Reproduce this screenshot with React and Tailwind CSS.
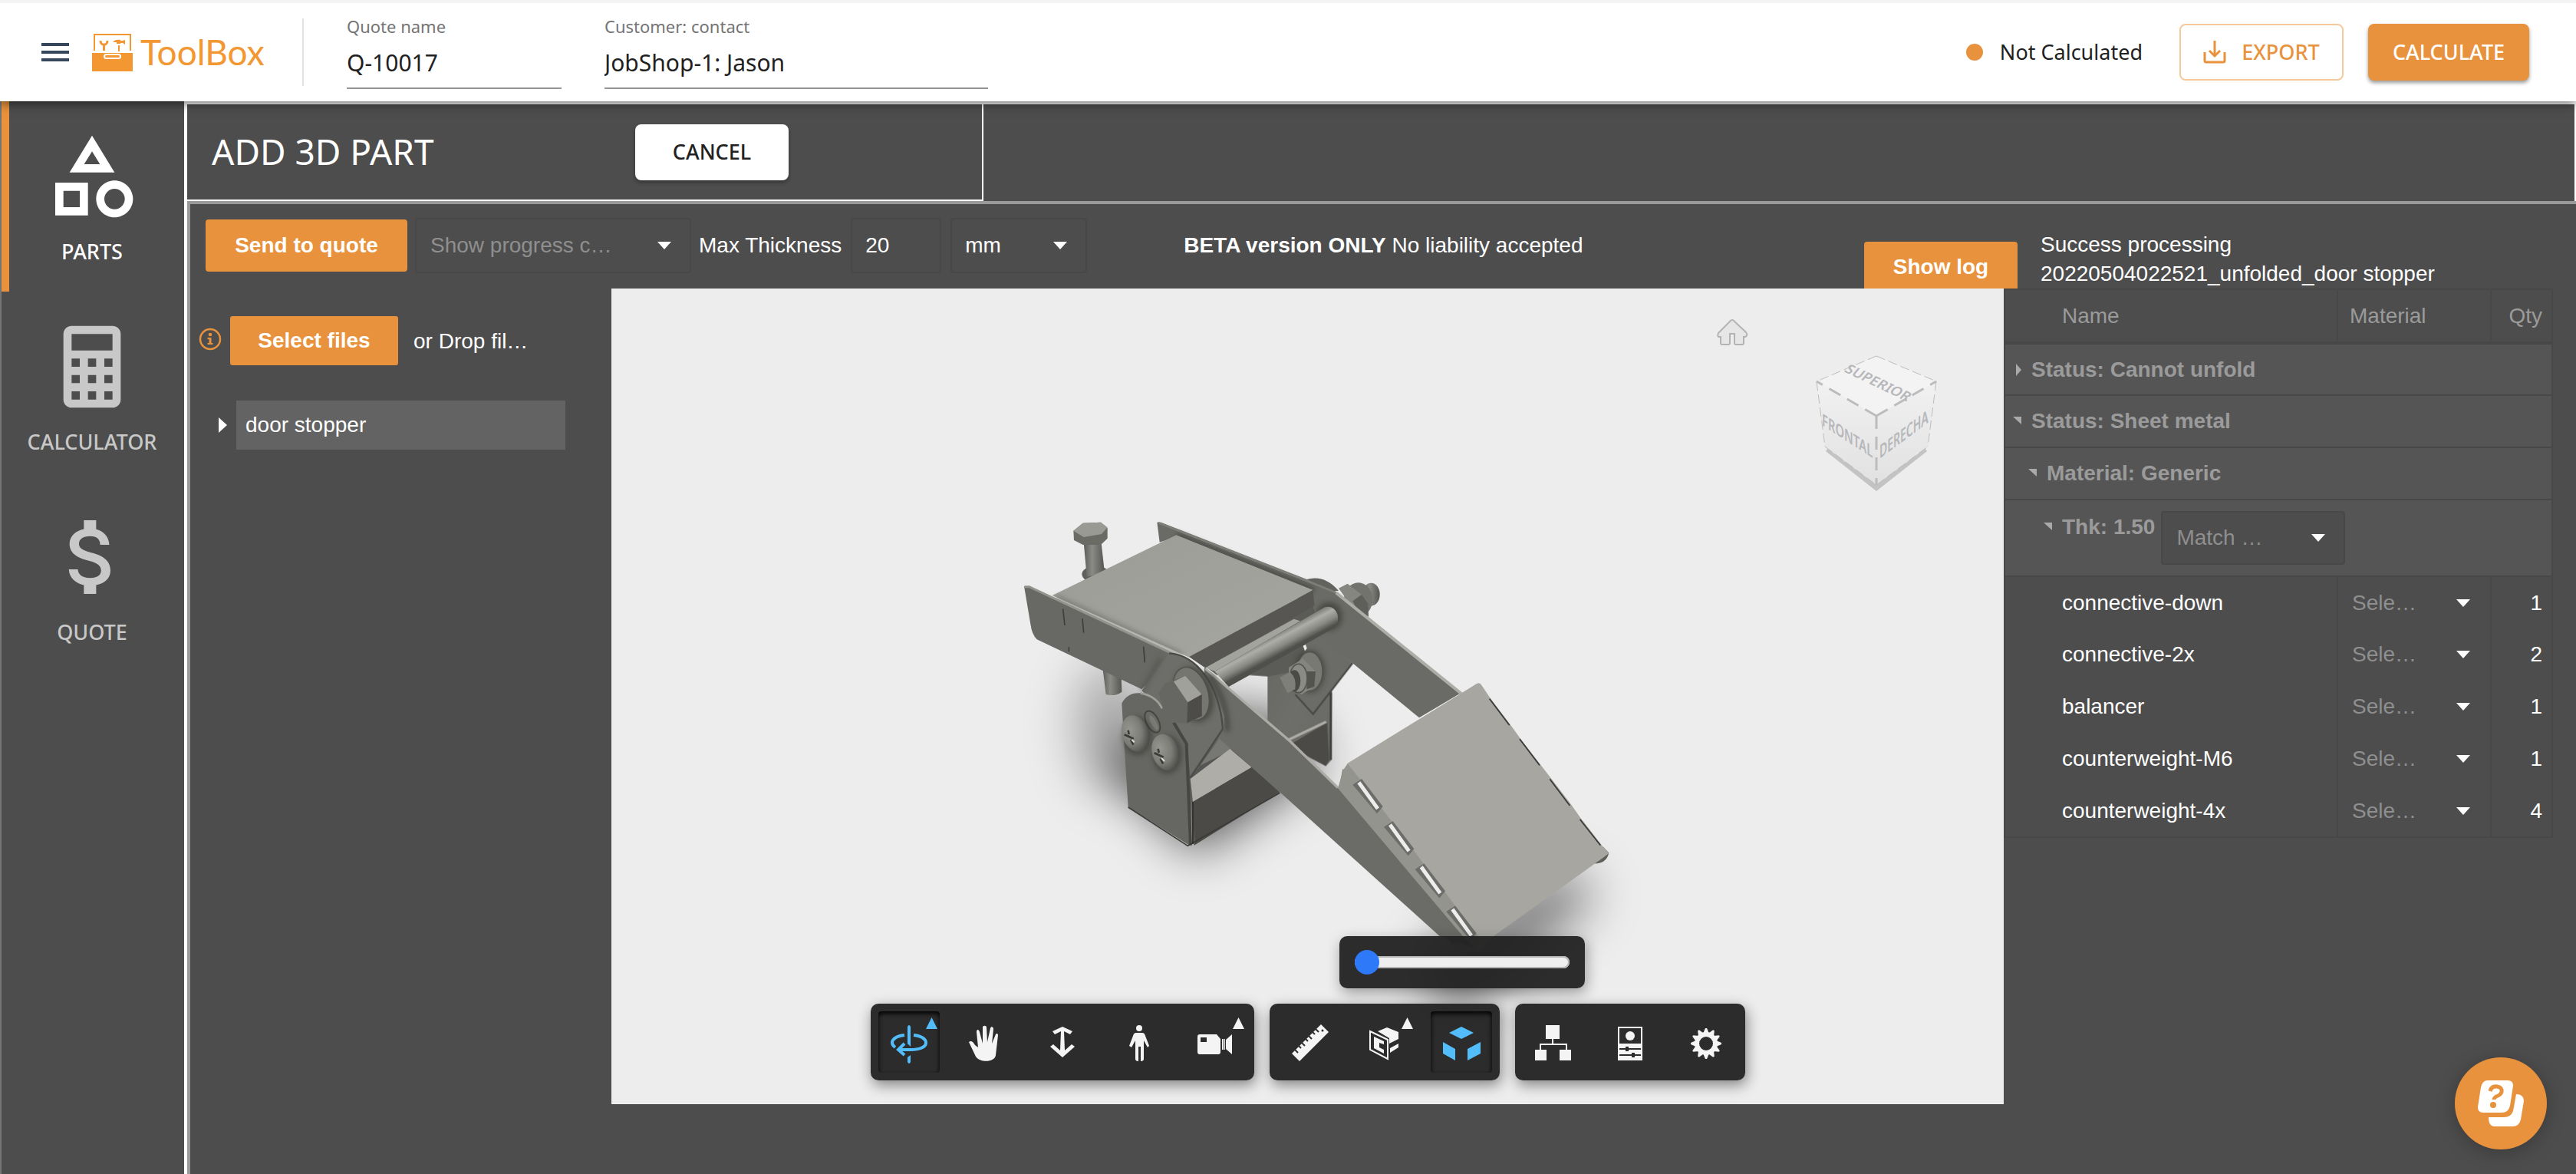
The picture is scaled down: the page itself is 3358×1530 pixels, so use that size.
import React, { useState } from "react";

const navItems = [
  {
    label: "PARTS",
    active: true,
    path: "M12 2l-5.5 9h11L12 2zm0 3.84L13.93 9h-3.87L12 5.84zM17.5 13c-2.49 0-4.5 2.01-4.5 4.5s2.01 4.5 4.5 4.5 4.5-2.01 4.5-4.5-2.01-4.5-4.5-4.5zm0 7a2.5 2.5 0 0 1 0-5 2.5 2.5 0 0 1 0 5zM3 21.5h8v-8H3v8zm2-6h4v4H5v-4z",
  },
  {
    label: "CALCULATOR",
    active: false,
    path: "M7 2h10a2 2 0 0 1 2 2v16a2 2 0 0 1-2 2H7a2 2 0 0 1-2-2V4a2 2 0 0 1 2-2M7 4v4h10V4H7M7 10v2h2v-2H7M11 10v2h2v-2h-2M15 10v2h2v-2h-2M7 14v2h2v-2H7M11 14v2h2v-2h-2M15 14v2h2v-2h-2M7 18v2h2v-2H7M11 18v2h2v-2h-2M15 18v2h2v-2h-2z",
  },
  {
    label: "QUOTE",
    active: false,
    path: "M11.8 10.9c-2.27-.59-3-1.2-3-2.15 0-1.09 1.01-1.85 2.7-1.85 1.78 0 2.44.85 2.5 2.1h2.21c-.07-1.72-1.12-3.3-3.21-3.81V3h-3v2.16c-1.94.42-3.5 1.68-3.5 3.61 0 2.31 1.91 3.46 4.7 4.13 2.5.6 3 1.48 3 2.41 0 .69-.49 1.79-2.7 1.79-2.06 0-2.87-.92-2.98-2.1h-2.2c.12 2.19 1.76 3.42 3.68 3.83V21h3v-2.15c1.95-.37 3.5-1.5 3.5-3.55 0-2.84-2.43-3.81-4.7-4.4z",
  },
];

const parts = [
  { name: "connective-down", qty: 1 },
  { name: "connective-2x", qty: 2 },
  { name: "balancer", qty: 1 },
  { name: "counterweight-M6", qty: 1 },
  { name: "counterweight-4x", qty: 4 },
];

const Caret = ({ className }) => (
  <svg viewBox="0 0 18 10" className={className} aria-hidden="true">
    <path d="M0 0h18L9 10z" fill="#fff" />
  </svg>
);

const Dropdown = ({ label, text, className, selectClass }) => (
  <div className={`relative ${className}`}>
    <select
      aria-label={label}
      className={`h-full w-full appearance-none bg-transparent text-[28px] outline-none ${selectClass}`}
    >
      <option>{text}</option>
    </select>
    <Caret className="pointer-events-none absolute top-1/2 right-[26px] h-[10px] w-[18px] -translate-y-1/2" />
  </div>
);

const Logo = () => (
  <a href="#" className="ml-[30px] flex items-center gap-[10px]">
    <svg viewBox="0 0 53 49" className="h-[49px] w-[53px]" aria-hidden="true">
      <path d="M3 22V1h47v21" fill="none" stroke="#f39733" strokeWidth="2" />
      <path d="M0 25h53v24H0z" fill="#f39733" />
      <rect x="16" y="27" width="21" height="5" rx="2.500" fill="#f39733" stroke="#fff" strokeWidth="2" />
      <path d="M11 9c0 7 9 7 9 0M15.500 13v9" fill="none" stroke="#f39733" strokeWidth="3" />
      <path d="M27 11c2-3 6-4 10-3v1h3l3-1v6l-3-2h-3v1h-5v-2zM34 15h2v8h-2z" fill="#f39733" />
    </svg>
    <span className="font-['Lato',sans-serif] text-[46px] leading-[56px] text-[#f39733]">ToolBox</span>
  </a>
);

const Header = () => {
  const [quote, setQuote] = useState("Q-10017");
  const [customer, setCustomer] = useState("JobShop-1: Jason");

  return (
    <header className="relative z-10 flex h-[132px] items-center border-t-4 border-[#f4f4f4] bg-white pl-[54px] pr-[61px] font-['Noto_Sans',sans-serif] shadow-[0_4px_12px_rgba(0,0,0,0.5)]">
      <div className="flex w-[340px] items-center">
        <button aria-label="Menu" className="flex w-9 flex-col gap-[6px]">
          <span className="h-1 bg-[#36475c]" />
          <span className="h-1 bg-[#36475c]" />
          <span className="h-1 bg-[#36475c]" />
        </button>
        <Logo />
      </div>
      <div className="h-[88px] w-[2px] bg-[#dfe3e7]" />
      <div className="ml-[56px] flex gap-[56px]">
        <label className="flex w-[280px] flex-col border-b-2 border-[#949494]">
          <span className="text-[22px] leading-[28px] text-[#757575]">Quote name</span>
          <input
            value={quote}
            onChange={(e) => setQuote(e.target.value)}
            className="h-[66px] w-full bg-transparent text-[30px] text-[#212121] outline-none"
          />
        </label>
        <label className="flex w-[500px] flex-col border-b-2 border-[#949494]">
          <span className="text-[22px] leading-[28px] text-[#757575]">Customer: contact</span>
          <input
            value={customer}
            onChange={(e) => setCustomer(e.target.value)}
            className="h-[66px] w-full bg-transparent text-[30px] text-[#212121] outline-none"
          />
        </label>
      </div>
      <div className="ml-auto flex items-center">
        <span className="h-[22px] w-[22px] rounded-full bg-[#e8923d]" />
        <span className="ml-[22px] text-[27px] text-[#212121]">Not Calculated</span>
        <button className="ml-[48px] flex h-[74px] w-[214px] items-center justify-center gap-[20px] rounded-[8px] border-2 border-[#f5c99b] text-[27px] font-medium text-[#e8923d]">
          <svg viewBox="0 0 30 30" className="h-[30px] w-[30px]" fill="none" stroke="#e8923d" strokeWidth="3" aria-hidden="true">
            <path d="M2 15v11q0 2 2 2h22q2 0 2-2V15M15 0v20M8 13l7 7 7-7" />
          </svg>
          EXPORT
        </button>
        <button className="ml-[32px] h-[74px] w-[210px] rounded-[8px] bg-[#e8923d] text-[27px] font-medium text-white shadow-[0_3px_5px_rgba(0,0,0,0.4)]">
          CALCULATE
        </button>
      </div>
    </header>
  );
};

const Sidebar = () => (
  <nav className="w-[240px] shrink-0 border-l-2 border-[#757575] font-['Noto_Sans',sans-serif]">
    {navItems.map((item) => (
      <a
        key={item.label}
        href="#"
        className={`flex h-[248px] flex-col items-center border-l-[10px] pt-[34px] pr-[12px] ${
          item.active ? "border-[#e8923d] text-white" : "border-transparent text-[#c8c8c8]"
        }`}
      >
        <svg viewBox="0 0 24 24" className="h-[128px] w-[128px]" fill="currentColor" fillRule="evenodd" aria-hidden="true">
          <path d={item.path} />
        </svg>
        <span className="mt-[16px] text-[27px] leading-[36px] font-medium">{item.label}</span>
      </a>
    ))}
  </nav>
);

const FilePanel = () => (
  <aside className="w-[549px] shrink-0 pt-[36px] pl-[11px] text-[28px] text-white">
    <div className="flex items-center">
      <svg viewBox="0 0 30 30" className="mb-1 h-[30px] w-[30px]" aria-hidden="true">
        <circle cx="15" cy="15" r="13" fill="none" stroke="#e8923d" strokeWidth="2.500" />
        <circle cx="15" cy="9" r="2.300" fill="#e8923d" />
        <path d="M11.500 13h5v7h2v2h-7v-2h2v-5h-2z" fill="#e8923d" />
      </svg>
      <button className="ml-[11px] h-[64px] w-[219px] rounded-[3px] bg-[#e8923d] text-[28px] font-bold">Select files</button>
      <span className="ml-[20px] pt-[2px]">or Drop fil…</span>
    </div>
    <div className="mt-[46px] flex items-center pl-[26px]">
      <svg viewBox="0 0 11 20" className="h-5 w-[11px]" aria-hidden="true">
        <path d="M0 0v20l11-10z" fill="#fff" />
      </svg>
      <div className="ml-[12px] flex h-[64px] w-[429px] items-center bg-[#636363] pl-[12px]">door stopper</div>
    </div>
  </aside>
);

const Toolbar = () => (
  <div className="flex h-[110px] pl-[20px] text-[28px] text-white">
    <div className="mt-[18px] flex h-[72px] items-center">
      <button className="h-[68px] w-[263px] rounded-[4px] bg-[#e8923d] font-bold">Send to quote</button>
      <Dropdown
        label="Show progress"
        text="Show progress c…"
        className="ml-[10px] h-[72px] w-[360px]"
        selectClass="rounded-[4px] border-2 border-[#484848] pl-[18px] text-[#8f8f8f]"
      />
      <label htmlFor="thickness" className="ml-[10px]">Max Thickness</label>
      <input
        id="thickness"
        defaultValue="20"
        className="ml-[12px] h-[72px] w-[118px] rounded-[4px] border-2 border-[#484848] bg-transparent pl-[17px] outline-none"
      />
      <Dropdown
        label="Unit"
        text="mm"
        className="ml-[12px] h-[72px] w-[178px]"
        selectClass="rounded-[4px] border-2 border-[#484848] pl-[17px] text-white"
      />
      <p className="ml-[126px]">
        <b>BETA version ONLY</b> No liability accepted
      </p>
    </div>
    <div className="ml-auto flex w-[928px] items-end">
      <button className="h-[61px] w-[200px] rounded-t-[4px] bg-[#e8923d] pt-1 font-bold">Show log</button>
      <p className="ml-[30px] leading-[38px]">
        Success processing
        <br />
        20220504022521_unfolded_door stopper
      </p>
    </div>
  </div>
);

// drawn in two local scales: the bracket side and the ramp side
const Model = () => (
  <svg viewBox="797 376 1815 1063" className="absolute inset-0 h-full w-full" aria-hidden="true">
    <defs>
      <filter id="soft" x="-60%" y="-60%" width="220%" height="220%">
        <feGaussianBlur stdDeviation="32" />
      </filter>
      <filter id="edge" x="-40%" y="-40%" width="180%" height="180%">
        <feGaussianBlur stdDeviation="9" />
      </filter>
      <linearGradient id="top" x1="0" y1="0" x2="1" y2="1">
        <stop offset="0" stopColor="#9c9c97" />
        <stop offset="1" stopColor="#a6a6a0" />
      </linearGradient>
      <linearGradient id="rod" gradientUnits="userSpaceOnUse" x1="1060" y1="565" x2="1100" y2="640">
        <stop offset="0" stopColor="#6f6f6b" />
        <stop offset="0.35" stopColor="#aeaea9" />
        <stop offset="0.7" stopColor="#888883" />
        <stop offset="1" stopColor="#4f4f4c" />
      </linearGradient>
      <linearGradient id="shaft" x1="0" y1="0" x2="1" y2="0">
        <stop offset="0" stopColor="#5c5c59" />
        <stop offset="0.4" stopColor="#8b8b86" />
        <stop offset="1" stopColor="#555552" />
      </linearGradient>
      <radialGradient id="screw" cx="0.35" cy="0.35" r="0.7">
        <stop offset="0" stopColor="#96968f" />
        <stop offset="0.6" stopColor="#7c7c77" />
        <stop offset="1" stopColor="#4c4c49" />
      </radialGradient>
      <linearGradient id="plate" x1="0" y1="0" x2="1" y2="1">
        <stop offset="0" stopColor="#666662" />
        <stop offset="0.5" stopColor="#6e6e6a" />
        <stop offset="1" stopColor="#686864" />
      </linearGradient>
      <linearGradient id="cubeSide" x1="0" y1="0" x2="0" y2="1">
        <stop offset="0" stopColor="#f1f1f1" />
        <stop offset="1" stopColor="#e1e1e1" />
      </linearGradient>
    </defs>

    <g filter="url(#soft)">
      <ellipse cx="1450" cy="945" rx="50" ry="85" fill="#000" opacity="0.28" />
      <path d="M1440 1000L1560 920 1700 940 1720 1000 1560 1112z" fill="#000" opacity="0.65" />
      <path d="M1860 1240L2040 1130 2080 1165 1980 1260 1880 1330z" fill="#000" opacity="0.5" />
    </g>

    <g transform="translate(1300 640) scale(0.33333)">
      {/* rear support */}
      <path d="M1057 700L1230 560 1310 790 1308 1050 1285 1075 1160 1000 1057 905z" fill="url(#plate)" />
      <path d="M1155 985L1290 905 1298 1050 1285 1075 1200 1030z" fill="#4b4a47" />
      <path d="M1140 972L1286 902" stroke="#aeada8" strokeWidth="10" />
      <path d="M1304 785V1050" stroke="#3f3f3c" strokeWidth="8" />
      <path d="M1210 570L1270 565 1390 672 1235 872 1140 770z" fill="#6b6b67" />
      <path d="M1390 672L1235 872 1165 795" fill="none" stroke="#484845" strokeWidth="7" />
      <path d="M985 720L1090 650 1210 590 1180 700 1060 725z" fill="#5b5b57" />
      <ellipse cx="1222" cy="705" rx="60" ry="84" fill="#2f2f2c" opacity="0.5" filter="url(#edge)" />
      <ellipse cx="1222" cy="705" rx="50" ry="76" fill="#797974" stroke="#51514e" strokeWidth="4" />
      <path d="M1140 690L1195 655 1245 705 1240 765 1190 795 1140 760z" fill="#85857f" />
      <path d="M1210 705L1245 705 1240 765 1210 775z" fill="#53534f" />
      <ellipse cx="1178" cy="732" rx="34" ry="56" fill="#8b8b86" stroke="#555552" strokeWidth="5" />
      <ellipse cx="1162" cy="742" rx="24" ry="42" fill="#4a4a47" />
      <path d="M1105 728L1145 708Q1172 730 1165 775L1135 790z" fill="#7f7f7a" />
      <path d="M1196 605l10-5 5 15-8 10z" fill="#ededed" />

      {/* bolt on the far side */}
      <path d="M1210 345Q1280 325 1335 390L1300 390z" fill="#62625e" />
      <ellipse cx="1462" cy="404" rx="34" ry="45" fill="url(#shaft)" />
      <ellipse cx="1412" cy="424" rx="56" ry="66" fill="#73736e" />
      <path d="M1335 380L1370 362 1425 405 1450 490 1400 470z" fill="#868680" />
      <path d="M1390 430L1425 405 1450 440 1452 492 1410 470z" fill="#5e5e5a" />

      {/* upright bolt */}
      <ellipse cx="385" cy="325" rx="54" ry="32" fill="#5f5f5b" />
      <path d="M338 200L406 195 420 320 350 335z" fill="url(#shaft)" />
      <path d="M298 155L335 125 405 122 431 145 431 185 405 210 335 210 300 192z" fill="#6b6b66" />
      <path d="M298 155L335 125 405 122 431 142 408 168 338 180z" fill="#9a9a94" />
      <path d="M412 690L485 725 487 785Q460 805 425 795z" fill="url(#shaft)" />

      {/* rear rail and arm */}
      <path d="M820 690L1240 440 1310 440 1280 580 1185 515 860 720z" fill="#5b5b57" />
      <path d="M625 122L640 122 1210 345 1325 395 1815 788 1650 886 1265 571 1235 450 700 180 635 200z" fill="#6a6a66" />
      <path d="M700 172L1238 388" stroke="#4c4c49" strokeWidth="22" filter="url(#edge)" />
      <path d="M630 124L1210 350 1325 397" fill="none" stroke="#7e7e79" strokeWidth="8" />
      <path d="M1325 397L1815 792" stroke="#adada7" strokeWidth="12" />

      {/* block */}
      <path d="M700 172L1235 387 750 650 215 408z" fill="url(#top)" />
      <path d="M230 415L720 640" stroke="#5f5f5b" strokeWidth="22" opacity="0.5" filter="url(#edge)" />
      <path d="M750 648L1235 387 1240 448 815 692z" fill="#575653" />
      <path d="M815 690L1160 500 1185 508 850 705z" fill="#a3a39d" />
      <ellipse cx="1298" cy="490" rx="52" ry="56" fill="#3c3c39" opacity="0.7" filter="url(#edge)" />
      <path d="M850 705L1280 454Q1315 445 1330 480 1340 520 1310 540L905 765z" fill="url(#rod)" />

      {/* base of the front bracket */}
      <path d="M760 1120L870 965 920 1010 790 1075z" fill="#777773" />
      <path d="M755 1125L910 1008 995 1080 765 1215z" fill="#aeada8" />
      <path d="M765 1215L995 1080 1105 1177 770 1385z" fill="#4b4a47" />

      {/* front rail */}
      <path d="M105 372L125 372 690 635 640 700 565 775 155 580Q135 560 130 520z" fill="#686864" />
      <path d="M107 374L125 374 690 638" fill="none" stroke="#94948e" strokeWidth="9" />
      <path d="M257 460l7 65M333 498l5 56M572 608l5 62M280 610v18" stroke="#3e3e3c" strokeWidth="5" />

      {/* front arm */}
      <path d="M810 690L1145 975 1335 1162 1352 1085 1392 1140 1880 1790 1730 1740 1105 1177 865 965 800 900z" fill="#6b6b67" />
      <path d="M815 695L1145 978 1332 1160" fill="none" stroke="#acaba6" strokeWidth="10" />
      <path d="M830 720Q900 820 900 940" fill="none" stroke="#43433f" strokeWidth="20" opacity="0.8" filter="url(#edge)" />

      {/* front lever and bracket */}
      <path d="M565 780L670 635C760 630 850 740 888 880L888 930 755 1120 740 985 690 905z" fill="#6d6d69" />
      <path d="M672 634C780 640 870 760 882 930L755 1120" fill="none" stroke="#4b4b48" strokeWidth="7" />
      <path d="M640 650L565 782" stroke="#454542" strokeWidth="12" opacity="0.6" filter="url(#edge)" />
      <path d="M487 830Q510 785 560 790 620 800 645 850L700 905 740 985 752 1385 512 1235 497 1000z" fill="#666662" />
      <path d="M560 790Q620 800 645 850" fill="none" stroke="#a09f99" strokeWidth="8" />
      <path d="M690 905L740 988 756 1385" fill="none" stroke="#464643" strokeWidth="12" />
      <path d="M512 1236L745 1387 1105 1180" fill="none" stroke="#3a3a38" strokeWidth="5" />
      <path d="M765 1215V1380" stroke="#333331" strokeWidth="6" />

      {/* front hex bolt */}
      <ellipse cx="768" cy="795" rx="76" ry="112" transform="rotate(-18 768 795)" fill="#2f2f2c" opacity="0.5" filter="url(#edge)" />
      <ellipse cx="758" cy="792" rx="66" ry="106" transform="rotate(-18 758 792)" fill="#767671" stroke="#50504d" strokeWidth="4" />
      <path d="M632 790L655 752 735 722 800 795 800 880 745 907 690 905 650 860z" fill="#666662" />
      <path d="M690 745L735 722 800 795 745 826z" fill="#a1a19b" />
      <path d="M745 826L800 795 800 880 742 907z" fill="#4d4c49" />

      <ellipse cx="607" cy="902" rx="24" ry="46" transform="rotate(-28 607 902)" fill="#6a6a66" stroke="#454542" strokeWidth="6" />
      <ellipse cx="612" cy="906" rx="10" ry="32" transform="rotate(-28 612 906)" fill="#7b7b76" />
      <ellipse cx="548" cy="958" rx="58" ry="76" fill="#33332f" opacity="0.5" filter="url(#edge)" />
      <ellipse cx="665" cy="1030" rx="58" ry="76" fill="#33332f" opacity="0.5" filter="url(#edge)" />
      <ellipse cx="540" cy="948" rx="52" ry="73" transform="rotate(-18 540 948)" fill="url(#screw)" />
      <ellipse cx="658" cy="1021" rx="52" ry="73" transform="rotate(-18 658 1021)" fill="url(#screw)" />
      <path d="M497 952l36 16M512 935l3 16M522 972l10 20M614 1024l36 16M629 1007l3 16M638 1046l10 20" stroke="#3a3a37" strokeWidth="8" />
      <path d="M526 972l10 10M642 1044l12 12" stroke="#dcdcd8" strokeWidth="6" />
    </g>

    <g transform="translate(1660 660) scale(0.33333 0.38265)">
      <path d="M1230 1215Q1300 1225 1312 1180L1290 1160z" fill="#5e5e5a" />
      <path d="M290 875L795 604Q808 598 815 610L850 655 928 745 965 790 1045 880 1085 925 1165 1016 1200 1060 1285 1155 1312 1182 862 1463 800 1520 750 1463 262 940z" fill="#a7a6a1" />
      <path d="M252 960L275 895 290 876 335 925 800 1463 800 1510 740 1463z" fill="#94948e" />
      <path d="M845 655l78 90M963 792l78 90M1081 929l78 90M1199 1066l80 88" stroke="#3a3a38" strokeWidth="5" />
      <path d="M245 965L740 1480 700 1490 240 1000z" fill="#6b6b67" />
      {[0, 1, 2, 3].map((i) => (
        <g key={i} transform={`translate(${i * 122} ${i * 144})`}>
          <path d="M310 948L345 928 428 1022 405 1046z" fill="#6c6c68" />
          <path d="M328 944L340 936 414 1026 402 1033z" fill="#ededed" />
        </g>
      ))}
    </g>

    {/* home */}
    <path
      d="M2258 417q-2 0-3 2l-15 15q-2 5 1 5h2v8q0 2 2 2h8q2 0 2-2v-12h6v12q0 2 2 2h8q2 0 2-2v-8h2q4-2 1-6l-15-14q-1-2-3-2z"
      fill="#e6e6e6"
      stroke="#b3b3b3"
      strokeWidth="2"
    />

    {/* view cube */}
    <path d="M2380 588L2446 640 2512 588 2506 580 2446 626 2386 580z" fill="#c3c3c3" />
    <path d="M2446 464L2524 497 2446 542 2368 497z" fill="#f3f3f3" />
    <path d="M2368 497L2446 542V632L2379 582z" fill="url(#cubeSide)" />
    <path d="M2524 497L2446 542V632L2513 582z" fill="url(#cubeSide)" />
    <path d="M2446 464L2524 497 2513 582M2446 464L2368 497 2379 582 2446 632 2513 582" fill="none" stroke="#bdbdbd" strokeWidth="1" strokeDasharray="12 5" />
    <path d="M2446 542L2368 497M2446 542L2524 497M2446 542V632" fill="none" stroke="#bcbcbc" strokeWidth="3" strokeDasharray="17 10" />
    <g fill="#b6b7ba" fontFamily="Noto Sans, sans-serif" fontSize="20" fontWeight="600">
      <text transform="matrix(0.84 0.4 -0.6 0.7 2403 484)">SUPERIOR</text>
      <text transform="matrix(0.74 0.48 0 1.1 2375 554)">FRONTAL</text>
      <text transform="matrix(0.7 -0.52 0 1.2 2450 598)">DERECHA</text>
    </g>
  </svg>
);

const ink = "#f4f4f4";
const tools = [
  [
    {
      label: "Orbit",
      active: true,
      menu: true,
      icon: (
        <g fill="none" stroke="#53bdfb" strokeWidth="4">
          <path d="M38 20q2-4 4 0v26l-4-4zM38 60l4-3v9q-2 4-4 0z" fill="#53bdfb" stroke="none" />
          <path d="M34 31C24 32 18 36 18 41q0 3 4 6M46 31c10 1 16 5 16 10 0 6-9 9-20 9H27" />
          <path d="M34 42l-8 8 8 7" />
        </g>
      ),
    },
    {
      label: "Pan",
      icon: <path d="M18 40c3-2 5-1 8 4l4 3-2-20c0-4 3-4 4 0l4 15V21c0-3 5-3 5 0l1 19 4-18c1-3 4-2 4 1l-2 19 5-12c1-2 3-1 3 1l-3 26c-1 10-21 10-26 2z" fill={ink} />,
    },
    {
      label: "Dolly",
      icon: <path d="M37 51l1-25-8 4-3-4 13-6 13 6-3 4-8-4 1 25 9-8 4 3-16 14-16-14 4-3z" fill={ink} />,
    },
    {
      label: "First person",
      icon: (
        <g fill={ink}>
          <ellipse cx="40" cy="22" rx="4" ry="4" />
          <path d="M36 28h8q3 0 4 4l5 13-2 2-5-9v24q0 3-4 3V46h-3v19q-4 0-4-3V38l-5 9-3-2 5-13q1-4 4-4z" />
        </g>
      ),
    },
    {
      label: "Camera",
      menu: true,
      icon: (
        <g fill={ink}>
          <path fillRule="evenodd" d="M19 30h22l5 6v17q0 3-3 3H19q-3 0-3-3V33q0-3 3-3zm1 4v6h8v-6z" />
          <path d="M48 36h2v14h-2zM51 36h1v14h-1zM53 37l8-7v26l-8-7z" />
        </g>
      ),
    },
  ],
  [
    {
      label: "Measure",
      icon: (
        <g>
          <path d="M57 17l10 10-38 38-10-10z" fill={ink} />
          <path d="M23 50l4 4M28 45l3 3M32 41l4 4M37 36l3 3M41 32l4 4M46 27l3 3M50 23l4 4" stroke="#2d2d2d" strokeWidth="2" />
          <circle cx="59" cy="25" r="1.500" fill="#2d2d2d" />
        </g>
      ),
    },
    {
      label: "Section",
      menu: true,
      icon: (
        <g>
          <path d="M21 26l23 11v25L21 50z" fill="none" stroke={ink} strokeWidth="2" />
          <path d="M26 33l13 6v4l-6-2v6l6 3v5l-13-7z" fill={ink} />
          <path d="M31 26l12-5 15 6v9l-12 6v-7zM47 48l11-6v5l-11 7z" fill={ink} />
        </g>
      ),
    },
    {
      label: "Explode",
      active: true,
      icon: <path d="M40 20l16 8-16 8-16-8zM16 40l16 9v15l-16-9zM65 40l-17 9v15l17-9z" fill="#53bdfb" />,
    },
  ],
  [
    {
      label: "Model tree",
      icon: (
        <g fill={ink}>
          <path d="M30 18h18v18H30zM16 50h15v14H16zM48 50h15v14H48z" />
          <path d="M39 36v7M23 50v-7h34v7" fill="none" stroke={ink} strokeWidth="2" />
        </g>
      ),
    },
    {
      label: "Properties",
      icon: (
        <g>
          <path d="M24 20h32v44H24z" fill={ink} />
          <path d="M26 22h28v20H26z" fill="#2d2d2d" />
          <circle cx="40" cy="32" r="6" fill={ink} />
          <path d="M26 49h28M26 57h28" stroke="#2d2d2d" strokeWidth="2" />
          <path d="M34 46h4v6h-4zM42 54h4v6h-4z" fill="#2d2d2d" />
        </g>
      ),
    },
    {
      label: "Settings",
      icon: (
        <g fill={ink}>
          <circle cx="39" cy="42" r="12" fill="none" stroke={ink} strokeWidth="6" />
          {[0, 30, 60, 90, 120, 150, 180, 210, 240, 270, 300, 330].map((deg) => (
            <path key={deg} d="M35 29l3-7h2l3 7z" transform={`rotate(${deg} 39 42)`} />
          ))}
        </g>
      ),
    },
  ],
];

const ViewerTools = () => (
  <div className="absolute inset-x-0 bottom-[31px] flex flex-col items-center gap-[20px]">
    <div className="ml-[403px] flex h-[68px] w-[320px] items-center justify-center rounded-[10px] bg-[#222222]/95 shadow-[2px_6px_18px_rgba(0,0,0,0.35)]">
      <input
        type="range"
        aria-label="Explode scale"
        min="0"
        max="100"
        defaultValue="0"
        className="h-4 w-[280px] appearance-none rounded-full bg-[#efefef] shadow-[inset_0_0_0_2px_#b5b5b5] [&::-webkit-slider-thumb]:h-8 [&::-webkit-slider-thumb]:w-8 [&::-webkit-slider-thumb]:appearance-none [&::-webkit-slider-thumb]:rounded-full [&::-webkit-slider-thumb]:bg-[#2d79f8]"
      />
    </div>
    <div className="flex gap-[20px]">
      {tools.map((group, g) => (
        <div key={g} className="flex gap-[20px] rounded-[10px] bg-[#222222]/95 p-[10px] shadow-[2px_6px_18px_rgba(0,0,0,0.45)]">
          {group.map((tool) => (
            <button
              key={tool.label}
              aria-label={tool.label}
              className={`h-[80px] w-[80px] rounded-[4px] ${tool.active ? "shadow-[inset_0_3px_6px_#000]" : ""}`}
            >
              <svg viewBox="0 0 80 80" className="h-[80px] w-[80px]" aria-hidden="true">
                {tool.icon}
                {tool.menu && <path d="M62 23L69.500 8 77 23z" fill={tool.active ? "#53bdfb" : ink} />}
              </svg>
            </button>
          ))}
        </div>
      ))}
    </div>
  </div>
);

const GroupMark = ({ open }) => (
  <svg viewBox="0 0 12 16" className="h-4 w-3" aria-hidden="true">
    <path d={open ? "M0 2h11v10z" : "M4 0v16l7-8z"} fill="#aaaaaa" />
  </svg>
);

const PartsTable = () => (
  <aside className="w-[746px] shrink-0 pr-[30px] text-[28px] text-white">
    <table className="w-full table-fixed border-collapse border-2 border-[#484848]">
      <colgroup>
        <col />
        <col className="w-[200px]" />
        <col className="w-[80px]" />
      </colgroup>
      <thead>
        <tr className="h-[70px] border-b-4 border-[#484848] text-[#9b9b9b]">
          <th className="pl-[74px] text-left font-normal">Name</th>
          <th className="border-x-2 border-[#484848] pl-[15px] text-left font-normal">Material</th>
          <th className="pr-[12px] text-right font-normal">Qty</th>
        </tr>
      </thead>
      <tbody>
        <tr className="h-[68px] border-b-2 border-[#484848] bg-[#555555] font-bold text-[#9b9b9b]">
          <td colSpan={3} className="pl-[10px]">
            <div className="flex items-center gap-[12px]"><GroupMark />Status: Cannot unfold</div>
          </td>
        </tr>
        <tr className="h-[68px] border-b-2 border-[#484848] bg-[#555555] font-bold text-[#9b9b9b]">
          <td colSpan={3} className="pl-[10px]">
            <div className="flex items-center gap-[12px]"><GroupMark open />Status: Sheet metal</div>
          </td>
        </tr>
        <tr className="h-[68px] border-b-2 border-[#484848] bg-[#555555] font-bold text-[#9b9b9b]">
          <td colSpan={3} className="pl-[30px]">
            <div className="flex items-center gap-[12px]"><GroupMark open />Material: Generic</div>
          </td>
        </tr>
        <tr className="h-[100px] border-b-2 border-[#484848] bg-[#555555] font-bold text-[#9b9b9b]">
          <td colSpan={3} className="pl-[50px]">
            <div className="flex items-start gap-[8px]">
              <span className="flex items-center gap-[12px]"><GroupMark open />Thk: 1.50</span>
              <Dropdown
                label="Match material"
                text="Match …"
                className="h-[70px] w-[240px]"
                selectClass="rounded-[4px] border-2 border-[#484848] !bg-[#4d4d4d] pl-[18px] font-normal text-[#8f8f8f]"
              />
            </div>
          </td>
        </tr>
        {parts.map((part) => (
          <tr key={part.name} className="h-[68px]">
            <td className="pl-[74px]">{part.name}</td>
            <td className="border-x-2 border-[#484848]">
              <Dropdown
                label={`Material for ${part.name}`}
                text="Sele…"
                className="h-[60px] w-full"
                selectClass="pl-[18px] text-[#8f8f8f]"
              />
            </td>
            <td className="pr-[12px] text-right">{part.qty}</td>
          </tr>
        ))}
      </tbody>
    </table>
  </aside>
);

const HelpButton = () => (
  <button
    aria-label="Help"
    className="fixed right-[38px] bottom-[32px] flex h-[120px] w-[120px] items-center justify-center rounded-full bg-[#e8923d] shadow-[0_4px_24px_rgba(0,0,0,0.25)]"
  >
    <svg viewBox="0 0 60 60" className="h-[60px] w-[60px]" aria-hidden="true">
      <path d="M13 0h26q7 0 7 7l-4 26q-2 9-11 9H7q-7 0-7-7L4 9q2-9 9-9z" fill="#fff" />
      <path d="M50 18q10 0 10 9l-4 24q-2 9-11 9H22q-8 0-8-12h20q9 0 12-8z" fill="#fff" />
      <path d="M16 14q2-7 9-6 7 1 6 7-1 4-7 6-3 2-3 4" fill="none" stroke="#e8923d" strokeWidth="5" />
      <circle cx="20" cy="32" r="4" fill="#e8923d" />
    </svg>
  </button>
);

const App = () => {
  return (
    <div className="flex min-h-screen flex-col bg-[#4d4d4d] font-['Liberation_Sans',Arial,sans-serif]">
      <Header />
      <div className="flex flex-1">
        <Sidebar />
        <main className="flex flex-1 flex-col border-l-4 border-white">
          <div className="h-[130px] border-t-4 border-r-2 border-white">
            <div className="flex h-full w-[1038px] items-center border-r-2 border-b-2 border-white pl-[32px] font-['Noto_Sans',sans-serif]">
              <h1 className="w-[552px] pb-[2px] text-[46px] text-white">ADD 3D PART</h1>
              <button className="h-[73px] w-[200px] rounded-[8px] bg-white text-[27px] font-medium text-[#212121] shadow-[0_3px_5px_rgba(0,0,0,0.3)]">
                CANCEL
              </button>
            </div>
          </div>
          <section className="flex flex-1 flex-col border-t-4 border-l-4 border-[#9a9a9a]">
            <Toolbar />
            <div className="flex flex-1 pb-[91px]">
              <FilePanel />
              <div className="relative flex-1 overflow-hidden bg-[#ededed]">
                <Model />
                <ViewerTools />
              </div>
              <PartsTable />
            </div>
          </section>
        </main>
      </div>
      <HelpButton />
    </div>
  );
};

export default App;
